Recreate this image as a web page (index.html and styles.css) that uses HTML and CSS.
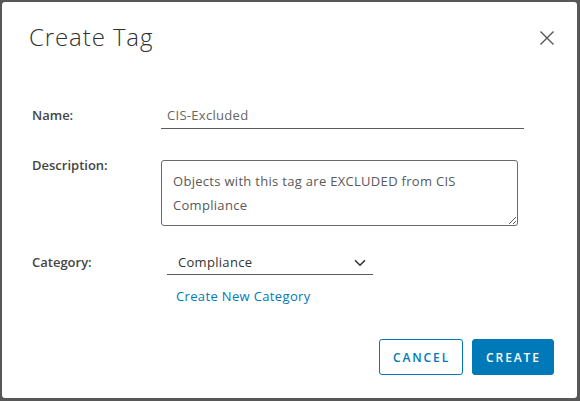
FILE: index.html
```html
<!DOCTYPE html>
<html lang="en">
<head>
<meta charset="utf-8">
<title>Create Tag</title>
<link rel="stylesheet" href="styles.css">
</head>
<body>
<div class="dialog">
  <div class="header">
    <h1 class="title">Create Tag</h1>
    <button class="close" aria-label="Close">
      <svg width="14" height="14" viewBox="0 0 14 14"><path d="M0.5 0.5 L13.5 13.5 M13.5 0.5 L0.5 13.5" stroke="#555" stroke-width="1.4" fill="none"/></svg>
    </button>
  </div>
  <div class="form">
    <div class="row row-name">
      <label class="label">Name:</label>
      <div class="input">CIS-Excluded</div>
    </div>
    <div class="row row-desc">
      <label class="label label-top">Description:</label>
      <textarea class="textarea" readonly>Objects with this tag are EXCLUDED from CIS Compliance</textarea>
    </div>
    <div class="row row-cat">
      <label class="label">Category:</label>
      <div class="select">
        <span class="select-text">Compliance</span>
        <svg class="chevron" width="12" height="8" viewBox="0 0 12 8"><path d="M1 1.2 L6 6.2 L11 1.2" stroke="#333" stroke-width="1.6" fill="none"/></svg>
      </div>
    </div>
    <div class="row row-link">
      <span class="label"></span>
      <a class="link" href="#">Create New Category</a>
    </div>
  </div>
  <div class="footer">
    <button class="btn btn-outline">CANCEL</button>
    <button class="btn btn-primary">CREATE</button>
  </div>
</div>
</body>
</html>
```

FILE: styles.css
```css
html, body {
  margin: 0;
  padding: 0;
}
body {
  background: #575757;
  width: 580px;
  height: 401px;
  overflow: hidden;
  font-family: "Open Sans", "Lato", sans-serif;
}
.dialog {
  margin: 2px 3px 3px 2px;
  height: 396px;
  background: #fff;
  border-radius: 3px;
  display: flex;
  flex-direction: column;
  box-sizing: border-box;
}
.header {
  display: flex;
  justify-content: space-between;
  align-items: flex-start;
  padding: 19px 23px 0 27px;
  height: 102px;
  box-sizing: border-box;
}
.title {
  margin: 0;
  font-size: 24px;
  line-height: 32px;
  font-weight: 300;
  color: #313131;
  letter-spacing: 0.9px;
}
.close {
  margin: 10px 0 0 0;
  padding: 0;
  border: 0;
  background: none;
  width: 14px;
  height: 14px;
  display: flex;
}
.form {
  display: flex;
  flex-direction: column;
  padding-left: 30px;
}
.row {
  display: flex;
  align-items: flex-start;
}
.label {
  width: 129px;
  flex: none;
  font-size: 13px;
  line-height: 20px;
  font-weight: 600;
  color: #454545;
}
.row-name .label {
  margin-top: 1px;
}
.label-top {
  line-height: 14px;
  margin-top: -2px;
}
.input {
  width: 363px;
  height: 25px;
  box-sizing: border-box;
  border-bottom: 1px solid #5c5c5c;
  padding-left: 6px;
  font-size: 13px;
  letter-spacing: 0.3px;
  line-height: 22px;
  color: #666;
}
.row-desc {
  margin-top: 31px;
}
.textarea {
  width: 357px;
  height: 66px;
  box-sizing: border-box;
  border: 1px solid #6a6a6a;
  border-radius: 3px;
  padding: 8px 11px 0 11px;
  margin: 0;
  font-family: inherit;
  font-size: 13px;
  letter-spacing: 0.3px;
  line-height: 24px;
  color: #595959;
  resize: vertical;
  outline: none;
  overflow: hidden;
}
.row-cat {
  margin-top: 26px;
}
.select {
  margin-left: 6px;
  width: 206px;
  height: 23px;
  box-sizing: border-box;
  border-bottom: 1px solid #5c5c5c;
  display: flex;
  align-items: center;
  justify-content: space-between;
  padding: 0 7px 2px 11px;
}
.select-text {
  font-size: 13px;
  letter-spacing: 0.3px;
  color: #333;
  line-height: 18px;
}
.chevron {
  margin-top: 1px;
}
.row-link {
  margin-top: 13px;
}
.link {
  margin-left: 15px;
  font-size: 13px;
  letter-spacing: 0.35px;
  line-height: 16px;
  color: #0079b8;
  text-decoration: none;
}
.footer {
  margin-top: auto;
  display: flex;
  justify-content: flex-end;
  gap: 9px;
  padding: 0 23px 23px 0;
}
.btn {
  height: 36px;
  box-sizing: border-box;
  border-radius: 3px;
  font-family: inherit;
  font-size: 12px;
  font-weight: 600;
  letter-spacing: 1.9px;
  padding: 0 0 0 1px;
  cursor: pointer;
}
.btn-outline {
  width: 84px;
  background: #fff;
  border: 1px solid #0079b8;
  color: #0079b8;
}
.btn-primary {
  width: 82px;
  background: #0079b8;
  border: 1px solid #0079b8;
  color: #fff;
}
```
